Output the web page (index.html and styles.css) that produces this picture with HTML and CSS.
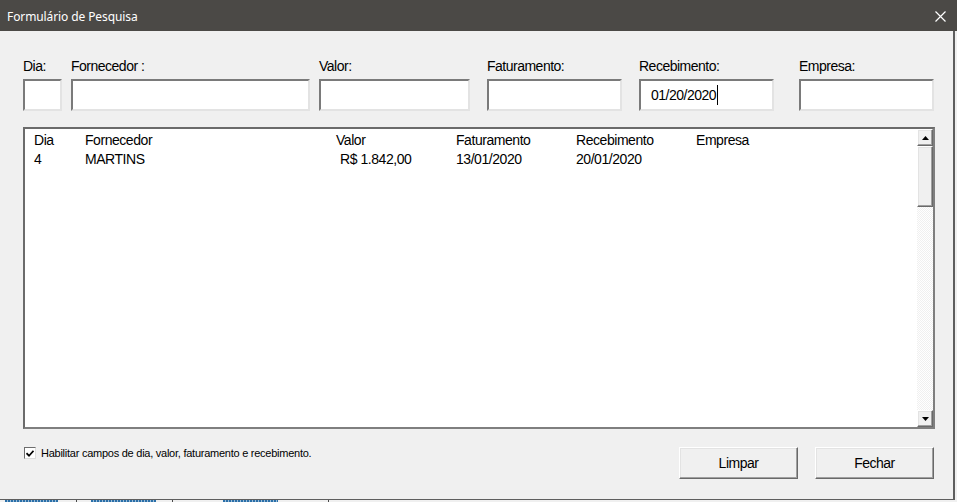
FILE: index.html
```html
<!DOCTYPE html>
<html lang="pt">
<head>
<meta charset="utf-8">
<title>Formulário de Pesquisa</title>
<link rel="stylesheet" href="styles.css">
</head>
<body>
<div class="window">
  <div class="titlebar">
    <span class="title">Formulário de Pesquisa</span>
    <svg class="close" width="11" height="11" viewBox="0 0 11 11"><path d="M0.5 0.5L10.5 10.5M10.5 0.5L0.5 10.5" stroke="#fff" stroke-width="1.2" fill="none"/></svg>
  </div>
  <div class="client">
    <div class="fields">
      <div class="field f-dia"><div class="label">Dia:</div><div class="box"></div></div>
      <div class="field f-forn"><div class="label">Fornecedor :</div><div class="box"></div></div>
      <div class="field f-valor"><div class="label">Valor:</div><div class="box"></div></div>
      <div class="field f-fat"><div class="label">Faturamento:</div><div class="box"></div></div>
      <div class="field f-rec"><div class="label">Recebimento:</div><div class="box"><span class="value">01/20/2020</span><span class="caret"></span></div></div>
      <div class="field f-emp"><div class="label">Empresa:</div><div class="box"></div></div>
    </div>
    <div class="listbox">
      <div class="list-content">
        <div class="row"><span>Dia</span><span>Fornecedor</span><span>Valor</span><span>Faturamento</span><span>Recebimento</span><span>Empresa</span></div>
        <div class="row"><span>4</span><span>MARTINS</span><span class="money">R$ 1.842,00</span><span>13/01/2020</span><span>20/01/2020</span><span></span></div>
      </div>
      <div class="scrollbar">
        <div class="sb-btn"><svg width="7" height="4" viewBox="0 0 7 4"><polygon points="3.5,0 7,4 0,4" fill="#000"/></svg></div>
        <div class="sb-thumb"></div>
        <div class="sb-track"></div>
        <div class="sb-btn"><svg width="7" height="4" viewBox="0 0 7 4"><polygon points="0,0 7,0 3.5,4" fill="#000"/></svg></div>
      </div>
    </div>
    <div class="footer">
      <div class="check">
        <span class="checkbox"><svg width="8" height="7" viewBox="0 0 8 7"><path d="M0.5 3.2L3 5.7L7.5 0.8" stroke="#000" stroke-width="1.7" fill="none"/></svg></span>
        <span class="check-label">Habilitar campos de dia, valor, faturamento e recebimento.</span>
      </div>
      <div class="buttons">
        <div class="btn">Limpar</div>
        <div class="btn">Fechar</div>
      </div>
    </div>
  </div>
</div>
<div class="strip">
  <span class="seg seg-a"></span>
  <span class="div div-a"></span>
  <span class="seg seg-b"></span>
  <span class="div div-b"></span>
  <span class="seg seg-c"></span>
  <span class="div div-c"></span>
</div>
</body>
</html>
```

FILE: styles.css
```css
html, body {
  margin: 0;
  padding: 0;
}
body {
  background: #f0f0f0;
  width: 957px;
  height: 502px;
  overflow: hidden;
  font-family: "Liberation Sans", Arial, sans-serif;
  color: #000;
}
.window {
  width: 957px;
  height: 500px;
  display: flex;
  flex-direction: column;
}
.titlebar {
  height: 31px;
  flex: 0 0 31px;
  width: 957px;
  background: #4b4946;
  display: flex;
  align-items: center;
  justify-content: space-between;
  padding: 0 11px 0 7px;
  box-sizing: border-box;
  color: #fff;
}
.title {
  font-family: "Noto Sans", "Open Sans", sans-serif;
  font-size: 12px;
  letter-spacing: -0.1px;
  padding-top: 1px;
}
.close {
  display: block;
  margin-top: 1px;
}
.client {
  flex: 1;
  width: 955px;
  box-sizing: border-box;
  background: #f0f0f0;
  border-right: 2px solid #5e5e5e;
  border-bottom: 1px solid #5e5e5e;
  padding: 26px 0 0 23px;
}
.fields {
  display: flex;
}
.label {
  height: 18px;
  line-height: 18px;
  font-size: 14px;
  letter-spacing: -0.5px;
  margin-bottom: 4px;
  white-space: nowrap;
}
.f-dia { width: 39px; }
.f-forn { width: 239px; margin-left: 9px; }
.f-valor { width: 151px; margin-left: 9px; }
.f-fat { width: 135px; margin-left: 17px; }
.f-rec { width: 135px; margin-left: 17px; }
.f-emp { width: 135px; margin-left: 25px; }
.box {
  height: 32px;
  box-sizing: border-box;
  background: #fff;
  border: 2px solid;
  border-color: #7a7a7a #e3e3e3 #e3e3e3 #7a7a7a;
  display: flex;
  align-items: center;
  padding-left: 10px;
  font-size: 14px;
  letter-spacing: -0.5px;
}
.caret {
  display: block;
  width: 1px;
  height: 20px;
  background: #000;
  margin-left: 1px;
}
.listbox {
  margin-top: 16px;
  width: 912px;
  height: 302px;
  box-sizing: border-box;
  border: 2px solid;
  border-color: #6b6b6b #7f7f7f #7f7f7f #6b6b6b;
  background: #fff;
  display: flex;
}
.list-content {
  flex: 1;
  padding: 2px 0 0 9px;
}
.row {
  display: grid;
  grid-template-columns: 51px 251px 120px 120px 120px auto;
  height: 19px;
  line-height: 19px;
  font-size: 14px;
  letter-spacing: -0.45px;
  white-space: nowrap;
}
.money {
  padding-left: 4px;
}
.scrollbar {
  width: 16px;
  display: flex;
  flex-direction: column;
}
.sb-btn, .sb-thumb {
  box-sizing: border-box;
  background: #f0f0f0;
  border: 1px solid;
  border-color: #fff #696969 #696969 #fff;
  box-shadow: inset -1px -1px #a0a0a0, inset 1px 1px #e3e3e3;
}
.sb-btn {
  height: 17px;
  display: flex;
  align-items: center;
  justify-content: center;
}
.sb-btn svg { display: block; }
.sb-thumb {
  height: 61px;
}
.sb-track {
  flex: 1;
  background: repeating-conic-gradient(#ffffff 0 25%, #f0f0f0 0 50%) 0 0 / 2px 2px;
}
.footer {
  width: 911px;
  margin-top: 18px;
  display: flex;
  justify-content: space-between;
  align-items: flex-start;
}
.check {
  display: flex;
  align-items: center;
  margin-left: 1px;
  height: 12px;
}
.checkbox {
  width: 12px;
  height: 12px;
  box-sizing: border-box;
  background: #fff;
  border: 1px solid;
  border-color: #6d6d6d #dcdcdc #dcdcdc #6d6d6d;
  display: flex;
  align-items: center;
  justify-content: center;
}
.checkbox svg { display: block; }
.check-label {
  margin-left: 5px;
  font-size: 11px;
  letter-spacing: -0.25px;
  white-space: nowrap;
}
.buttons {
  display: flex;
  gap: 17px;
}
.btn {
  width: 119px;
  height: 32px;
  box-sizing: border-box;
  background: #f0f0f0;
  border: 1px solid;
  border-color: #fff #696969 #696969 #fff;
  box-shadow: inset -1px -1px #a0a0a0, inset 1px 1px #e3e3e3;
  display: flex;
  align-items: center;
  justify-content: center;
  font-size: 14px;
  letter-spacing: -0.5px;
}
.strip {
  height: 2px;
  display: flex;
  align-items: stretch;
}
.seg {
  display: block;
  background: repeating-linear-gradient(90deg, #2a6fa8 0 2px, #9bbbd6 2px 3px);
}
.div {
  display: block;
  width: 1px;
  background: #4a4a4a;
}
.seg-a { width: 53px; margin-left: 5px; }
.div-a { margin-left: 18px; }
.seg-b { width: 65px; margin-left: 14px; }
.div-b { margin-left: 16px; }
.seg-c { width: 55px; margin-left: 50px; }
.div-c { margin-left: 50px; }
```
